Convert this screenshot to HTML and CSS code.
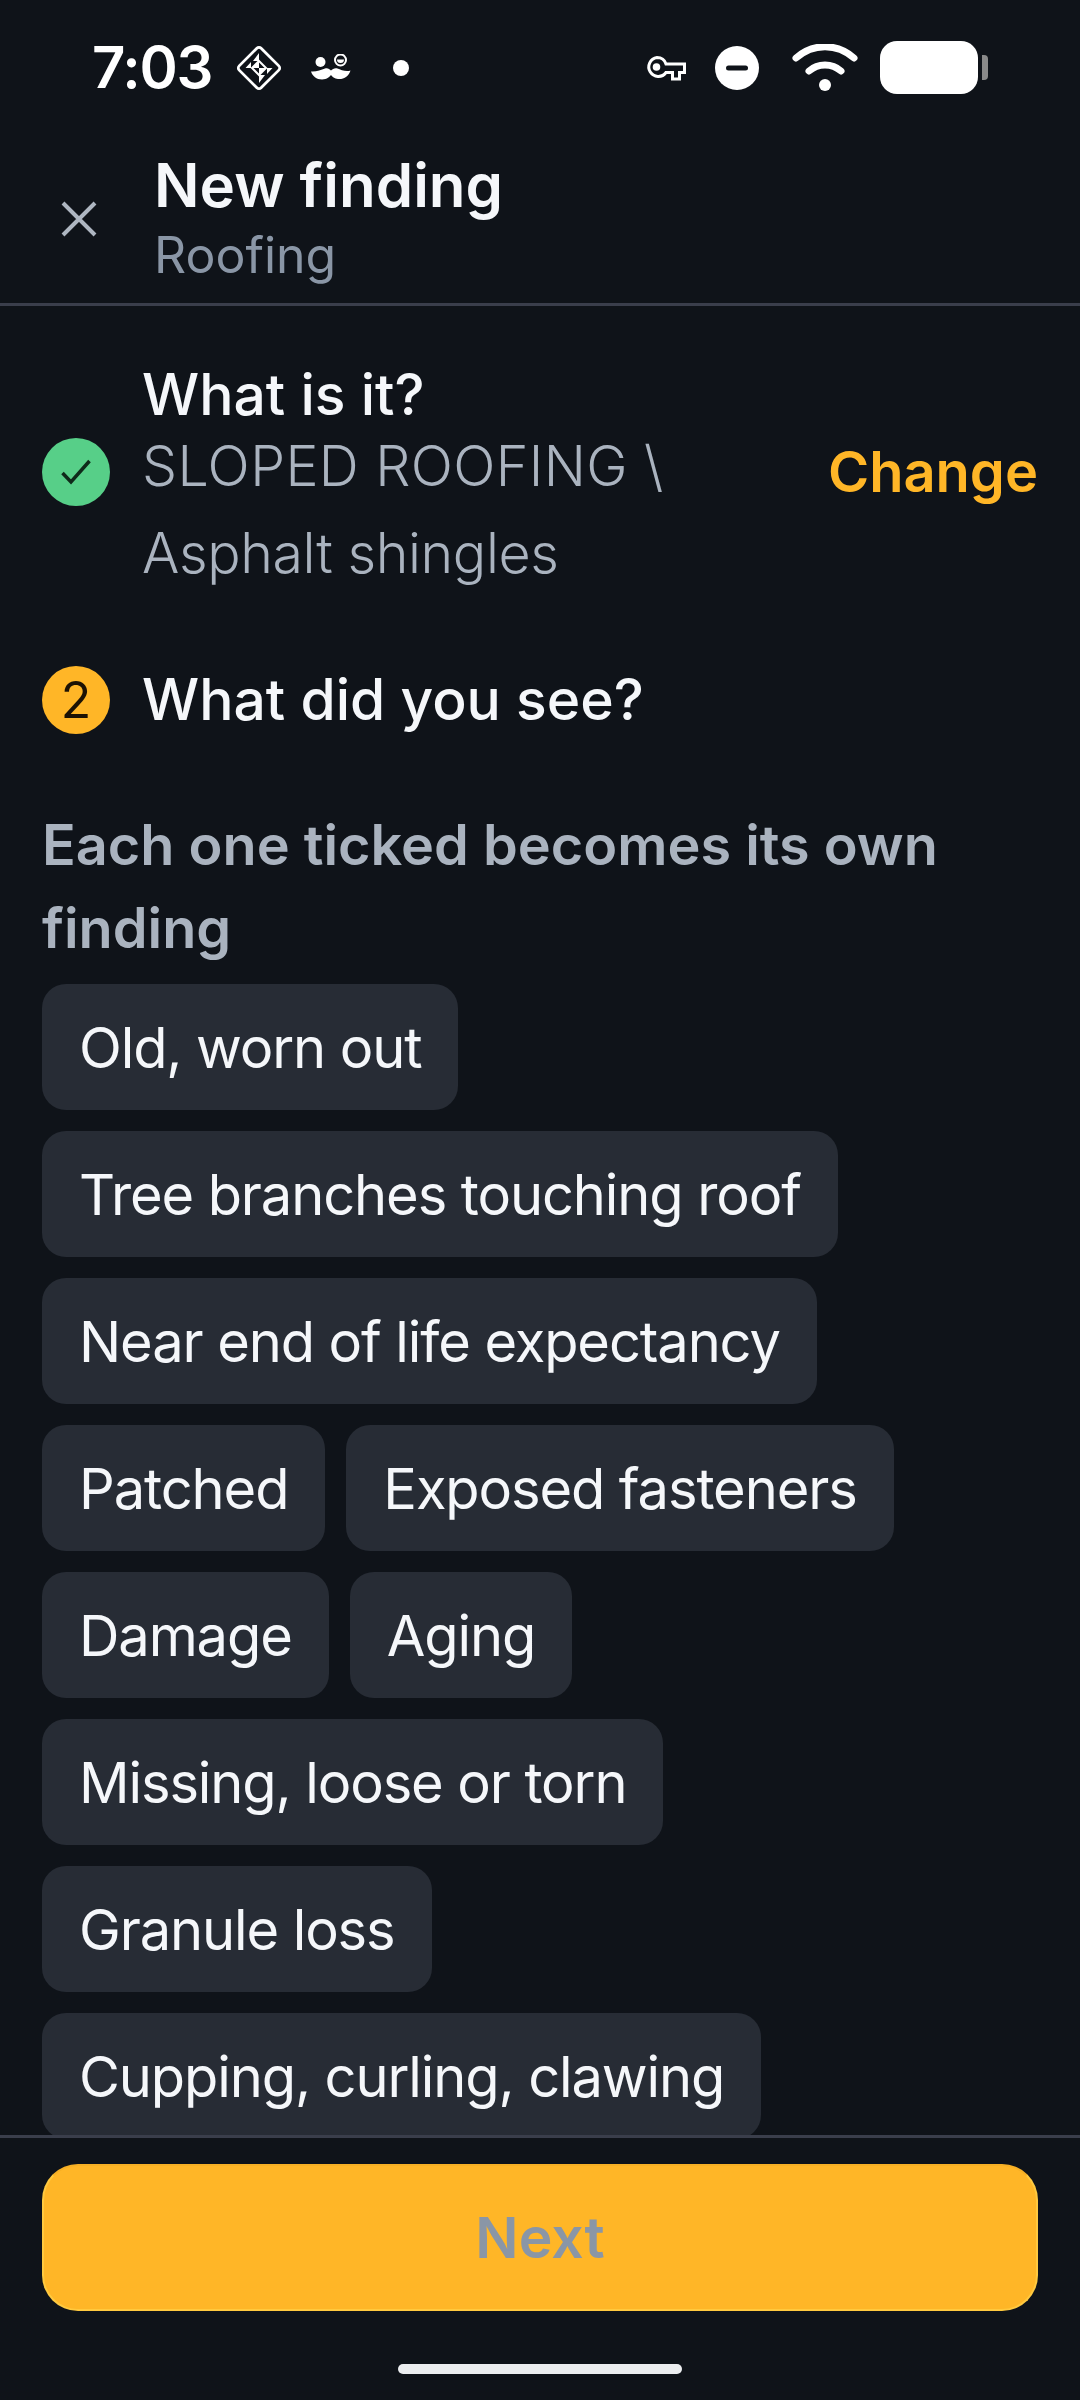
FILE: index.html
```html
<!DOCTYPE html>
<html lang="en">
<head>
<meta charset="UTF-8">
<meta name="viewport" content="width=device-width, initial-scale=1.0">
<title>New finding</title>
<link rel="stylesheet" href="styles.css">
</head>
<body>
<div class="app">
    <!-- Status bar -->
    <div class="status">
        <div class="status-left">
            <span class="time">7:03</span>
            <svg class="ic-diamond" width="46" height="46" viewBox="0 0 46 46">
                <rect x="7.500" y="7.500" width="31" height="31" rx="3" transform="rotate(45 23 23)" fill="none" stroke="#fff" stroke-width="2.800"/>
                <path d="M23 8L23 16L17 16Z M23 30L29 30L23 38Z M15 23L9.500 23L15 17Z M31 23L36.500 23L31 29Z" fill="#fff"/>
                <path d="M23 16L30 23L23 30L16 23Z" fill="none" stroke="#fff" stroke-width="2"/>
                <path d="M23 16L23 23L16 23Z M23 23L30 23L23 30Z" fill="#fff"/>
            </svg>
            <svg class="ic-stache" width="40" height="28" viewBox="0 0 40 28">
                <circle cx="9.500" cy="8" r="5" fill="#fff"/>
                <circle cx="29.500" cy="6" r="5.500" fill="none" stroke="#fff" stroke-width="2"/>
                <path d="M26 5.500a3.500 3.500 0 0 0 7 0z" fill="#fff"/>
                <path d="M0 17.500C5 18 10 16 14 14.500C16.500 13.500 18.500 15 20 16.500C21.500 15 24 13.500 26.500 14.500C30 16 35 18 39.500 16.500C38 22 33 25.500 27 25C23.500 24.500 21 22.500 20 21C19 22.500 16 25.500 11 25.500C5.500 25.500 1.500 22 0 17.500Z" fill="#fff"/>
            </svg>
            <span class="status-dot"></span>
        </div>
        <div class="status-right">
            <svg class="ic-key" width="41" height="26" viewBox="0 0 41 26">
                <path d="M12 2.500a9.500 9.500 0 0 1 9 6.500H39.500V17.500H34.500V24H27.500V17.500H21a9.500 9.500 0 1 1-9-15Z" fill="none" stroke="#fff" stroke-width="3"/>
                <circle cx="11.500" cy="12" r="3.800" fill="#fff"/>
            </svg>
            <svg class="ic-dnd" width="44" height="46" viewBox="0 0 44 46">
                <circle cx="22" cy="23" r="22" fill="#fff"/>
                <rect x="11" y="20.500" width="22" height="5" rx="2.500" fill="#0f1319"/>
            </svg>
            <svg class="ic-wifi" width="66" height="48" viewBox="0 0 66 48">
                <path d="M4 14C21-1 45-1 62 14" fill="none" stroke="#fff" stroke-width="7" stroke-linecap="round"/>
                <path d="M17 27C26 19 40 19 49 27" fill="none" stroke="#fff" stroke-width="7" stroke-linecap="round"/>
                <circle cx="33" cy="41" r="6" fill="#fff"/>
            </svg>
            <div class="battery">
                <div class="battery-body"></div>
                <div class="battery-nub"></div>
            </div>
        </div>
    </div>

    <!-- Header -->
    <header class="topbar">
        <svg class="ic-close" width="36" height="36" viewBox="0 0 36 36">
            <path d="M2 2L34 34M34 2L2 34" stroke="#aeb6c1" stroke-width="4" fill="none"/>
        </svg>
        <div class="topbar-text">
            <h1 class="title">New finding</h1>
            <div class="subtitle">Roofing</div>
        </div>
    </header>

    <!-- Scrolling content -->
    <main class="content">
        <div class="step step-done">
            <div class="badge badge-green">
                <svg width="30" height="26" viewBox="0 0 30 26">
                    <path d="M1.500 14L10 23L28.500 2" fill="none" stroke="#0f2a1a" stroke-width="3.500"/>
                </svg>
            </div>
            <div class="step-text">
                <div class="step-title">What is it?</div>
                <div class="step-value step-group">SLOPED ROOFING \</div>
                <div class="step-value step-type">Asphalt shingles</div>
            </div>
            <span class="change">Change</span>
        </div>

        <div class="step step-current">
            <div class="badge badge-yellow">2</div>
            <div class="step-title">What did you see?</div>
        </div>

        <p class="hint">Each one ticked becomes its own finding</p>

        <div class="chips">
            <span class="chip">Old, worn out</span>
            <span class="chip">Tree branches touching roof</span>
            <span class="chip">Near end of life expectancy</span>
            <span class="chip">Patched</span>
            <span class="chip">Exposed fasteners</span>
            <span class="chip">Damage</span>
            <span class="chip">Aging</span>
            <span class="chip">Missing, loose or torn</span>
            <span class="chip">Granule loss</span>
            <span class="chip">Cupping, curling, clawing</span>
        </div>
    </main>

    <!-- Footer -->
    <footer class="bottom">
        <button class="next" type="button">Next</button>
        <div class="home-bar"></div>
    </footer>
</div>
</body>
</html>
```

FILE: styles.css
```css
* {
    box-sizing: border-box;
}

body {
    margin: 0;
    background-color: #0f1319;
    font-family: Inter, "Noto Sans", sans-serif;
    color: #f5f7fa;
}

.app {
    width: 1080px;
    height: 2400px;
    display: flex;
    flex-direction: column;
    overflow: hidden;
}

/* status bar */
.status {
    height: 135px;
    flex: none;
    padding: 41px 92px 0 92px;
    display: flex;
    justify-content: space-between;
    align-items: flex-start;
}

.status-left,
.status-right {
    display: flex;
    align-items: center;
    height: 53px;
}

.time {
    font-size: 58px;
    font-weight: 600;
    letter-spacing: -1.200px;
    color: #fff;
    line-height: 53px;
}

.ic-diamond {
    margin-left: 24px;
}

.ic-stache {
    margin-left: 29px;
}

.status-dot {
    width: 16px;
    height: 16px;
    margin-left: 42px;
    border-radius: 50%;
    background-color: #fff;
}

.ic-key {
    margin-right: 29px;
}

.ic-dnd {
    margin-right: 33px;
}

.ic-wifi {
    margin-right: 22px;
}

.battery {
    display: flex;
    align-items: center;
    gap: 4px;
}

.battery-body {
    width: 98px;
    height: 53px;
    border-radius: 17px;
    background-color: #fff;
}

.battery-nub {
    width: 6px;
    height: 25px;
    border-radius: 0 4px 4px 0;
    background-color: #8a8a8a;
}

/* header */
.topbar {
    height: 171px;
    flex: none;
    display: flex;
    align-items: center;
    padding-left: 61px;
    border-bottom: 3px solid #3a3e4b;
}

.topbar-text {
    margin-left: 60px;
}

.title {
    margin: 0 0 0 -3px;
    font-size: 60px;
    line-height: 70px;
    font-weight: 600;
    color: #f5f7fa;
}

.subtitle {
    margin: 2px 0 0 -3px;
    font-size: 50px;
    line-height: 66px;
    color: #8a96a6;
}

/* steps */
.content {
    flex: 1;
    min-height: 0;
    overflow: hidden;
    padding: 62px 42px 0;
}

.step {
    display: flex;
    align-items: center;
}

.step-title {
    font-size: 57px;
    line-height: 54px;
    font-weight: 500;
    color: #f5f7fa;
}

.step-value {
    font-size: 55.500px;
    line-height: 87px;
    font-weight: 300;
    color: #aab3bf;
}

.step-group {
    letter-spacing: 0.400px;
}

.step-type {
    letter-spacing: -0.400px;
}

.step-text {
    flex: 1;
    margin-left: 32px;
}

.step-current {
    margin-top: 70px;
}

.step-current .step-title {
    margin-left: 32px;
}

.badge {
    width: 68px;
    height: 68px;
    flex: none;
    border-radius: 50%;
    display: flex;
    align-items: center;
    justify-content: center;
}

.badge-green {
    margin-bottom: 21px;
    background-color: #57cf88;
}

.badge-yellow {
    background-color: #ffb627;
    color: #1c1204;
    font-size: 50px;
}

.change {
    margin-bottom: 21px;
    font-size: 56px;
    font-weight: 600;
    color: #ffb627;
}

.hint {
    margin: 69px 0 15px;
    font-size: 55.800px;
    line-height: 83px;
    font-weight: 600;
    color: #aab3bf;
}

/* chips */
.chips {
    display: flex;
    flex-wrap: wrap;
    gap: 21px;
}

.chip {
    height: 126px;
    padding: 2px 37px 0;
    display: flex;
    align-items: center;
    border-radius: 24px;
    background-color: #272c35;
    font-size: 56px;
    letter-spacing: -1.100px;
    color: #f5f7fa;
}

/* footer */
.bottom {
    height: 265px;
    flex: none;
    padding: 26px 42px 0;
    border-top: 3px solid #3a3e4b;
    background-color: #0f1319;
}

.next {
    display: block;
    width: 100%;
    height: 147px;
    border: 2px solid #ffc93f;
    border-top-color: #f7b025;
    border-radius: 36px;
    background-color: #ffb627;
    font-family: inherit;
    font-size: 57px;
    font-weight: 600;
    color: #8a96a6;
}

.home-bar {
    width: 284px;
    height: 10px;
    margin: 53px auto 0;
    border-radius: 5px;
    background-color: #eceef0;
}
```
